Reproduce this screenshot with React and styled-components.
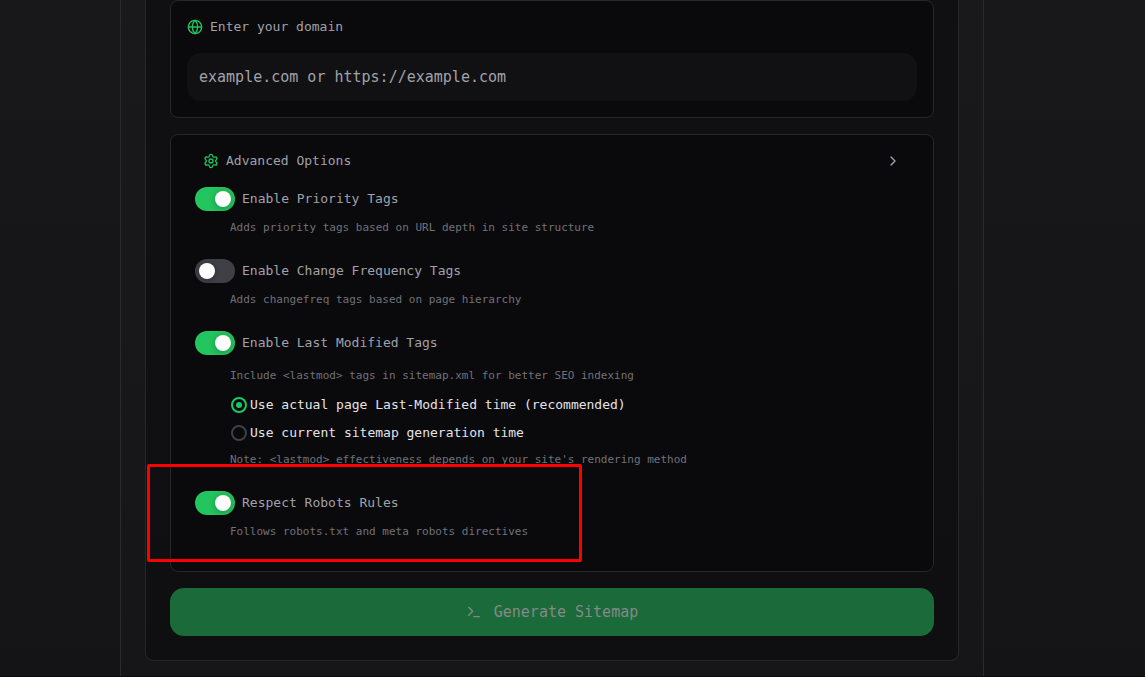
import { useState } from 'react';
import styled, { createGlobalStyle } from 'styled-components';
import { ChevronRight, Globe, Settings, Terminal } from 'lucide-react';

const GlobalStyle = createGlobalStyle`
  * {
    box-sizing: border-box;
  }
  body {
    margin: 0;
    background: linear-gradient(#18181a, #141416);
    font-family: 'DejaVu Sans Mono', 'Liberation Mono', monospace;
    font-size: 13px;
    line-height: 20px;
    color: #a1a1aa;
  }
  button, input {
    font-family: inherit;
  }
`;

const Page = styled.div`
  padding: 0 161px 0 120px;
  min-height: 100vh;
  display: flex;
  border-bottom: 1px solid #0c090b;
`;
const Column = styled.main`
  flex: 1;
  min-width: 0;
  padding: 0 24px 15px;
  background: linear-gradient(#19191c, #161618);
  border: 1px solid #2a2a2d;
  border-width: 0 1px;
`;
const Form = styled.form`
  display: flex;
  flex-direction: column;
  gap: 16px;
  padding: 0 24px 24px;
  background: linear-gradient(#101012, #0f0f11);
  border: 1px solid #27272a;
  border-top: 0;
  border-radius: 0 0 8px 8px;
`;
const Card = styled.section`
  display: flex;
  flex-direction: column;
  gap: 16px;
  padding: 16px;
  background: #0a0a0c;
  border: 1px solid #27272a;
  border-radius: 8px;
`;
const Label = styled.label`
  display: flex;
  align-items: center;
  gap: 7px;

  & svg {
    color: #22c55e;
  }
`;
const DomainInput = styled.input`
  width: 100%;
  height: 48px;
  padding: 0 12px;
  border: 0;
  border-radius: 14px;
  outline: none;
  background: #111113;
  color: #e4e4e7;
  font-size: 15px;

  &::placeholder {
    color: #a1a1aa;
    opacity: 1;
  }
`;
const OptionsToggle = styled.button`
  display: flex;
  align-items: center;
  gap: 7px;
  width: 100%;
  padding: 0 16px;
  border: 0;
  background: none;
  color: #a1a1aa;
  font-size: 13px;
  line-height: 20px;
  text-align: left;

  & svg:first-child {
    color: #22c55e;
  }
  & svg:last-child {
    margin-left: auto;
  }
`;
const Options = styled.div`
  display: flex;
  flex-direction: column;
  gap: 22px;
  padding: 0 8px 14px;
`;
const Option = styled.div`
  position: relative;
`;
const SwitchLabel = styled.label`
  display: flex;
  align-items: center;
  gap: 7px;
  width: fit-content;
`;
const Switch = styled.input`
  appearance: none;
  display: flex;
  align-items: center;
  width: 40px;
  height: 24px;
  margin: 0;
  padding: 0 4px;
  border-radius: 12px;
  background: #3f3f46;

  &::before {
    content: '';
    width: 16px;
    height: 16px;
    border-radius: 50%;
    background: #fff;
    box-shadow: 0 1px 6px rgba(0, 0, 0, 0.3);
  }
  &:checked {
    justify-content: flex-end;
    background: #22c55e;
  }
`;
const Details = styled.div`
  padding: ${(props) => (props.$spaced ? 12 : 8)}px 0 0 35px;
`;
const Hint = styled.p`
  margin: 0;
  color: #71717a;
  font-size: 11px;
  line-height: 18px;
`;
const Choices = styled.div`
  display: flex;
  flex-direction: column;
  gap: 8px;
  padding: 10px 0 8px 1px;
`;
const RadioLabel = styled.label`
  display: flex;
  align-items: center;
  gap: 3px;
  color: #e4e4e7;
`;
const Radio = styled.input`
  appearance: none;
  display: grid;
  place-items: center;
  width: 16px;
  height: 16px;
  margin: 0;
  border: 2px solid #3f3f46;
  border-radius: 50%;

  &:checked {
    border-color: #17c964;
  }
  &:checked::before {
    content: '';
    width: 6px;
    height: 6px;
    border-radius: 50%;
    background: #17c964;
  }
`;
// frame drawn over the option that is being pointed out
const Highlight = styled.div`
  position: absolute;
  top: -27px;
  left: -48px;
  width: 435px;
  height: 98px;
  border: 3px solid #ff0000;
  border-radius: 2px;
  pointer-events: none;
`;
const SubmitButton = styled.button`
  display: flex;
  align-items: center;
  justify-content: center;
  gap: 12px;
  height: 48px;
  border: 0;
  border-radius: 14px;
  background: #1b6a39;
  color: #858987;
  font-size: 15px;
`;

function SwitchOption({ label, hint, defaultChecked, spaced, highlighted, children }) {
  return (
    <Option>
      <SwitchLabel>
        <Switch type="checkbox" role="switch" defaultChecked={defaultChecked} />
        {label}
      </SwitchLabel>
      <Details $spaced={spaced}>
        <Hint>{hint}</Hint>
        {children}
      </Details>
      {highlighted && <Highlight />}
    </Option>
  );
}

function App() {
  const [domain, setDomain] = useState('');
  const [open, setOpen] = useState(true);

  return (
    <>
      <GlobalStyle />
      <Page>
        <Column>
          <Form onSubmit={(e) => e.preventDefault()}>
            <Card>
              <Label htmlFor="domain">
                <Globe size={16} />
                Enter your domain
              </Label>
              <DomainInput
                id="domain"
                value={domain}
                onChange={(e) => setDomain(e.target.value)}
                placeholder="example.com or https://example.com"
              />
            </Card>
            <Card>
              <OptionsToggle type="button" aria-expanded={open} onClick={() => setOpen(!open)}>
                <Settings size={16} />
                Advanced Options
                <ChevronRight size={16} />
              </OptionsToggle>
              {open && (
                <Options>
                  <SwitchOption
                    label="Enable Priority Tags"
                    hint="Adds priority tags based on URL depth in site structure"
                    defaultChecked
                  />
                  <SwitchOption
                    label="Enable Change Frequency Tags"
                    hint="Adds changefreq tags based on page hierarchy"
                  />
                  <SwitchOption
                    label="Enable Last Modified Tags"
                    hint="Include <lastmod> tags in sitemap.xml for better SEO indexing"
                    defaultChecked
                    spaced
                  >
                    <Choices>
                      <RadioLabel>
                        <Radio type="radio" name="lastmod" defaultChecked />
                        Use actual page Last-Modified time (recommended)
                      </RadioLabel>
                      <RadioLabel>
                        <Radio type="radio" name="lastmod" />
                        Use current sitemap generation time
                      </RadioLabel>
                    </Choices>
                    <Hint>Note: &lt;lastmod&gt; effectiveness depends on your site's rendering method</Hint>
                  </SwitchOption>
                  <SwitchOption
                    label="Respect Robots Rules"
                    hint="Follows robots.txt and meta robots directives"
                    defaultChecked
                    highlighted
                  />
                </Options>
              )}
            </Card>
            <SubmitButton type="submit">
              <Terminal size={16} />
              Generate Sitemap
            </SubmitButton>
          </Form>
        </Column>
      </Page>
    </>
  );
}

export default App;
